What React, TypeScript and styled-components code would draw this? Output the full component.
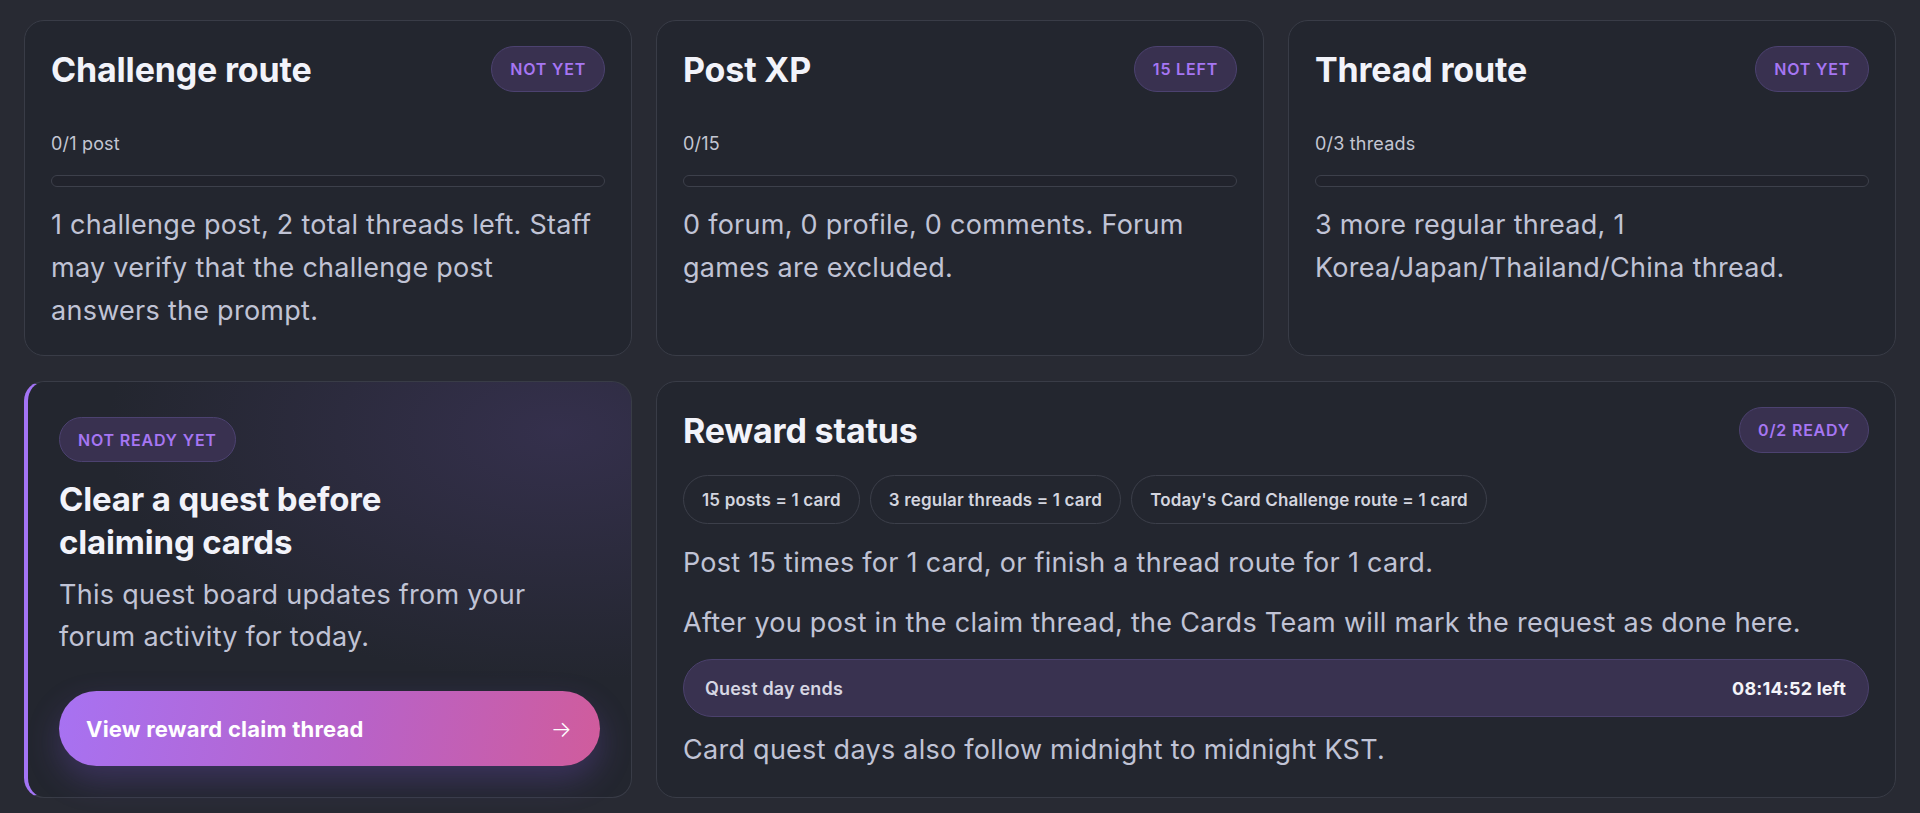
import React from "react";
import styled, { createGlobalStyle } from "styled-components";

const Global = createGlobalStyle`
  html, body {
    margin: 0;
    padding: 0;
    background: #282a33;
  }
  body {
    font-family: Inter, "Noto Sans", "Liberation Sans", sans-serif;
    -webkit-font-smoothing: antialiased;
  }
  * { box-sizing: border-box; }
`;

const Board = styled.main`
  width: 1920px;
  display: grid;
  grid-template-columns: repeat(3, minmax(0, 1fr));
  column-gap: 24px;
  row-gap: 25px;
  padding: 20px 24px 16px;
`;

const Card = styled.section<{ $span?: number; $bottom?: number }>`
  grid-column: span ${(p) => p.$span ?? 1};
  display: flex;
  flex-direction: column;
  background: #23262f;
  border: 1px solid #393c47;
  border-radius: 20px;
  padding: 25px 26px ${(p) => p.$bottom ?? 23}px 26px;
`;

const Header = styled.header`
  display: flex;
  align-items: center;
  justify-content: space-between;
  gap: 16px;
`;

const Title = styled.h2`
  margin: 0;
  font-size: 34px;
  line-height: 41px;
  font-weight: 700;
  letter-spacing: -0.005em;
  color: #f2f3fa;
`;

const Badge = styled.span`
  display: inline-flex;
  align-items: center;
  flex-shrink: 0;
  height: 46px;
  padding: 0 18px;
  border-radius: 999px;
  background: #393150;
  border: 1px solid #4c4270;
  color: #a676f3;
  font-size: 16px;
  font-weight: 600;
  letter-spacing: 0.05em;
  text-transform: uppercase;
`;

const Meta = styled.div`
  margin-top: 38px;
  font-size: 18px;
  line-height: 27px;
  letter-spacing: 0.01em;
  color: #c4c6d3;
`;

const Track = styled.div`
  margin-top: 18px;
  height: 12px;
  border-radius: 999px;
  border: 1px solid #3d404b;
  background: #21232c;
  overflow: hidden;
`;

const Fill = styled.div`
  height: 100%;
  border-radius: 999px;
  background: linear-gradient(90deg, #a772f2, #d05c9c);
`;

const Body = styled.p<{ $gap?: number }>`
  margin: ${(p) => p.$gap ?? 16}px 0 0;
  font-size: 27px;
  line-height: 43px;
  letter-spacing: 0.01em;
  color: #c0c3d5;
`;

const CtaCard = styled.section`
  display: flex;
  flex-direction: column;
  align-items: flex-start;
  border: 1px solid #393c47;
  border-left: 4px solid #a374f5;
  border-radius: 20px;
  padding: 35px 31px 31px 31px;
  background:
    radial-gradient(ellipse 75% 60% at 88% 12%, rgba(74, 60, 112, 0.45), rgba(74, 60, 112, 0) 100%),
    #23262f;
`;

const CtaBadge = styled(Badge)`
  height: 45px;
`;

const CtaTitle = styled.h2`
  margin: 16px 0 0;
  max-width: 380px;
  font-size: 33px;
  line-height: 43px;
  font-weight: 700;
  letter-spacing: -0.005em;
  color: #f2f3fa;
`;

const CtaText = styled.p`
  margin: 10px 0 0;
  max-width: 490px;
  font-size: 27px;
  line-height: 42px;
  letter-spacing: 0.01em;
  color: #c0c3d5;
`;

const ClaimButton = styled.a`
  margin-top: auto;
  align-self: stretch;
  height: 75px;
  display: flex;
  align-items: center;
  justify-content: space-between;
  padding: 0 28px 0 27px;
  border-radius: 999px;
  background: linear-gradient(100deg, #a772f2 0%, #b862c8 55%, #d05c9c 100%);
  box-shadow: 0 14px 32px rgba(112, 78, 190, 0.32);
  color: #ffffff;
  font-size: 22px;
  font-weight: 700;
  letter-spacing: 0.01em;
  text-decoration: none;
`;

const Arrow = styled.span`
  font-size: 22px;
  font-weight: 300;
`;

const Pills = styled.div`
  margin-top: 22px;
  display: flex;
  flex-wrap: wrap;
  gap: 10px;
`;

const Pill = styled.span`
  display: inline-flex;
  align-items: center;
  height: 49px;
  padding: 0 18px;
  border-radius: 999px;
  border: 1px solid #3c3f4a;
  color: #d3d5df;
  font-size: 17px;
  font-weight: 600;
  letter-spacing: 0.01em;
`;

const Countdown = styled.div`
  margin-top: 15px;
  height: 58px;
  display: flex;
  align-items: center;
  justify-content: space-between;
  padding: 0 22px 0 21px;
  border-radius: 999px;
  background: #393250;
  border: 1px solid #4b416d;
  font-size: 18px;
  font-weight: 600;
  letter-spacing: 0.01em;
  color: #d6d6e2;
`;

const Time = styled.span`
  font-weight: 700;
  color: #f4f4f9;
`;

type Route = {
  title: string;
  badge: string;
  meta: string;
  progress: number;
  text: string;
};

const routes: Route[] = [
  {
    title: "Challenge route",
    badge: "Not yet",
    meta: "0/1 post",
    progress: 0,
    text: "1 challenge post, 2 total threads left. Staff may verify that the challenge post answers the prompt.",
  },
  {
    title: "Post XP",
    badge: "15 left",
    meta: "0/15",
    progress: 0,
    text: "0 forum, 0 profile, 0 comments. Forum games are excluded.",
  },
  {
    title: "Thread route",
    badge: "Not yet",
    meta: "0/3 threads",
    progress: 0,
    text: "3 more regular thread, 1 Korea/Japan/Thailand/China thread.",
  },
];

export default function App() {
  return (
    <>
      <Global />
      <Board>
        {routes.map((r) => (
          <Card key={r.title}>
            <Header>
              <Title>{r.title}</Title>
              <Badge>{r.badge}</Badge>
            </Header>
            <Meta>{r.meta}</Meta>
            <Track>
              <Fill style={{ width: `${r.progress * 100}%` }} />
            </Track>
            <Body>{r.text}</Body>
          </Card>
        ))}

        <CtaCard>
          <CtaBadge>Not ready yet</CtaBadge>
          <CtaTitle>Clear a quest before claiming cards</CtaTitle>
          <CtaText>This quest board updates from your forum activity for today.</CtaText>
          <ClaimButton href="#">
            <span>View reward claim thread</span>
            <Arrow>→</Arrow>
          </ClaimButton>
        </CtaCard>

        <Card $span={2} $bottom={26}>
          <Header>
            <Title>Reward status</Title>
            <Badge>0/2 ready</Badge>
          </Header>
          <Pills>
            <Pill>15 posts = 1 card</Pill>
            <Pill>3 regular threads = 1 card</Pill>
            <Pill>Today's Card Challenge route = 1 card</Pill>
          </Pills>
          <Body $gap={17}>Post 15 times for 1 card, or finish a thread route for 1 card.</Body>
          <Body $gap={17}>After you post in the claim thread, the Cards Team will mark the request as done here.</Body>
          <Countdown>
            <span>Quest day ends</span>
            <Time>08:14:52 left</Time>
          </Countdown>
          <Body $gap={11}>Card quest days also follow midnight to midnight KST.</Body>
        </Card>
      </Board>
    </>
  );
}
